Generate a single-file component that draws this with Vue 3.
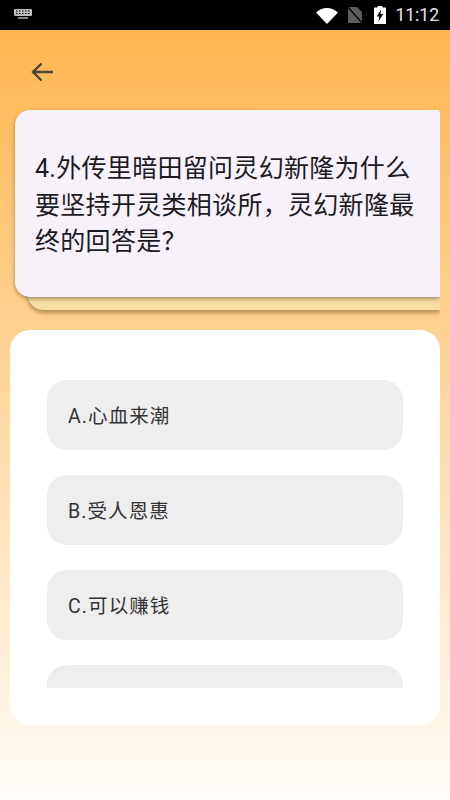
<script setup>
const options = ['A.心血来潮', 'B.受人恩惠', 'C.可以赚钱', 'D.']
</script>

<template>
  <div class="page">
    <header class="status">
      <svg class="kbd" viewBox="0 0 18 10" width="18" height="10">
        <path fill="#bdbdbd" d="M1 0h16a1 1 0 0 1 1 1v5a1 1 0 0 1-1 1H1a1 1 0 0 1-1-1V1a1 1 0 0 1 1-1z" />
        <path fill="#000" d="M2 1.500h1.500v1H2zM5 1.500h1.500v1H5zM8 1.500h1.500v1H8zM11 1.500h1.500v1H11zM14 1.500h1.500v1H14zM2 4h1.500v1H2zM5 4h1.500v1H5zM8 4h1.500v1H8zM11 4h1.500v1H11zM14 4h1.500v1H14z" />
        <rect x="4" y="8.300" width="10" height="1.400" fill="#bdbdbd" />
      </svg>
      <div class="status-right">
        <svg viewBox="0 0 22 16" width="22" height="16">
          <path fill="#fff" d="M0 4.500C3 1.800 6.800 0 11 0s8 1.800 11 4.500L11 16z" />
        </svg>
        <svg viewBox="0 0 16 18" width="16" height="18">
          <path fill="#5c5c5c" d="M1 1h9l5 5v11H1z" />
          <path stroke="#000" stroke-width="1.300" d="M0 0l16 18" />
        </svg>
        <svg class="battery" viewBox="0 0 12 18" width="12" height="18">
          <path fill="#fff" d="M3.500 0h5v1.500H12V18H0V1.500h3.500z" />
          <path fill="#000" d="M7 3.500L2.800 10.500h2.500L4.500 15.500l4.700-7.500H6.600z" />
        </svg>
        <span class="time">11:12</span>
      </div>
    </header>

    <main class="body">
      <button class="back" aria-label="返回">
        <svg viewBox="0 0 24 24" width="24" height="24">
          <path fill="none" stroke="#4a4640" stroke-width="2.400" d="M23 12H3M11.500 3.500L3 12l8.500 8.500" />
        </svg>
      </button>

      <section class="stack">
        <div class="card-back"></div>
        <div class="card">
          <p class="question">4.外传里暗田留问灵幻新隆为什么要坚持开灵类相谈所，灵幻新隆最终的回答是？</p>
        </div>
      </section>

      <section class="panel">
        <div class="list">
          <div v-for="opt in options" :key="opt" class="option">
            <span v-if="opt !== 'D.'">{{ opt }}</span>
          </div>
        </div>
      </section>
    </main>
  </div>
</template>

<style>
html, body { margin: 0; padding: 0; }
</style>

<style scoped>
.page {
  width: 450px;
  height: 800px;
  display: flex;
  flex-direction: column;
  overflow: hidden;
  font-family: Roboto, "Noto Sans CJK SC", sans-serif;
}
.status {
  height: 30px;
  flex: none;
  background: #000;
  display: flex;
  align-items: center;
  justify-content: space-between;
  padding: 0 11px 0 14px;
}
.kbd { margin-bottom: 2px; }
.status-right {
  display: flex;
  align-items: center;
  gap: 9px;
}
.status-right svg:first-child { margin-top: 1px; }
.battery { margin-left: 2px; }
.time {
  color: #e6e6e6;
  font-size: 17.500px;
}
.body {
  flex: 1;
  background: linear-gradient(180deg, #ffb64f 0%, #fffdfa 100%);
  display: flex;
  flex-direction: column;
}
.back {
  width: 24px;
  height: 24px;
  padding: 0;
  margin: 30px 0 0 30px;
  border: 0;
  background: none;
}
.stack {
  margin: 26px 10px 0 15px;
  height: 200px;
  display: grid;
  grid-template-rows: 187px 13px;
}
.card-back {
  grid-row: 1 / 3;
  grid-column: 1;
  margin: 30px 0 0 13px;
  background: #f9dfa6;
  border-radius: 0 0 0 15px;
  box-shadow: 0 3px 4px rgba(120, 90, 40, 0.55);
  clip-path: inset(0 0 -8px -8px);
}
.card {
  grid-row: 1;
  grid-column: 1;
  z-index: 1;
  background: #f7f2fa;
  border-radius: 15px 3px 0 15px;
  box-shadow: 0 2px 4px rgba(90, 70, 40, 0.5);
  clip-path: inset(-8px 0 -8px -8px);
  padding: 41px 20px 0;
  box-sizing: border-box;
}
.question {
  margin: 0;
  font-size: 25px;
  line-height: 36.500px;
  color: #1c1b1f;
  letter-spacing: 0.3px;
}
.panel {
  margin: 20px 10px 0;
  height: 395px;
  background: #fff;
  border-radius: 20px;
  padding: 50px 37px 37px;
  box-sizing: border-box;
}
.list {
  height: 308px;
  overflow: hidden;
  display: flex;
  flex-direction: column;
  gap: 25px;
}
.option {
  flex: none;
  height: 70px;
  background: #eeeeee;
  border-radius: 20px;
  display: flex;
  align-items: center;
  padding: 0 0 1px 21px;
  box-sizing: border-box;
  font-size: 19.500px;
  color: #333;
  letter-spacing: 1.100px;
}
</style>
